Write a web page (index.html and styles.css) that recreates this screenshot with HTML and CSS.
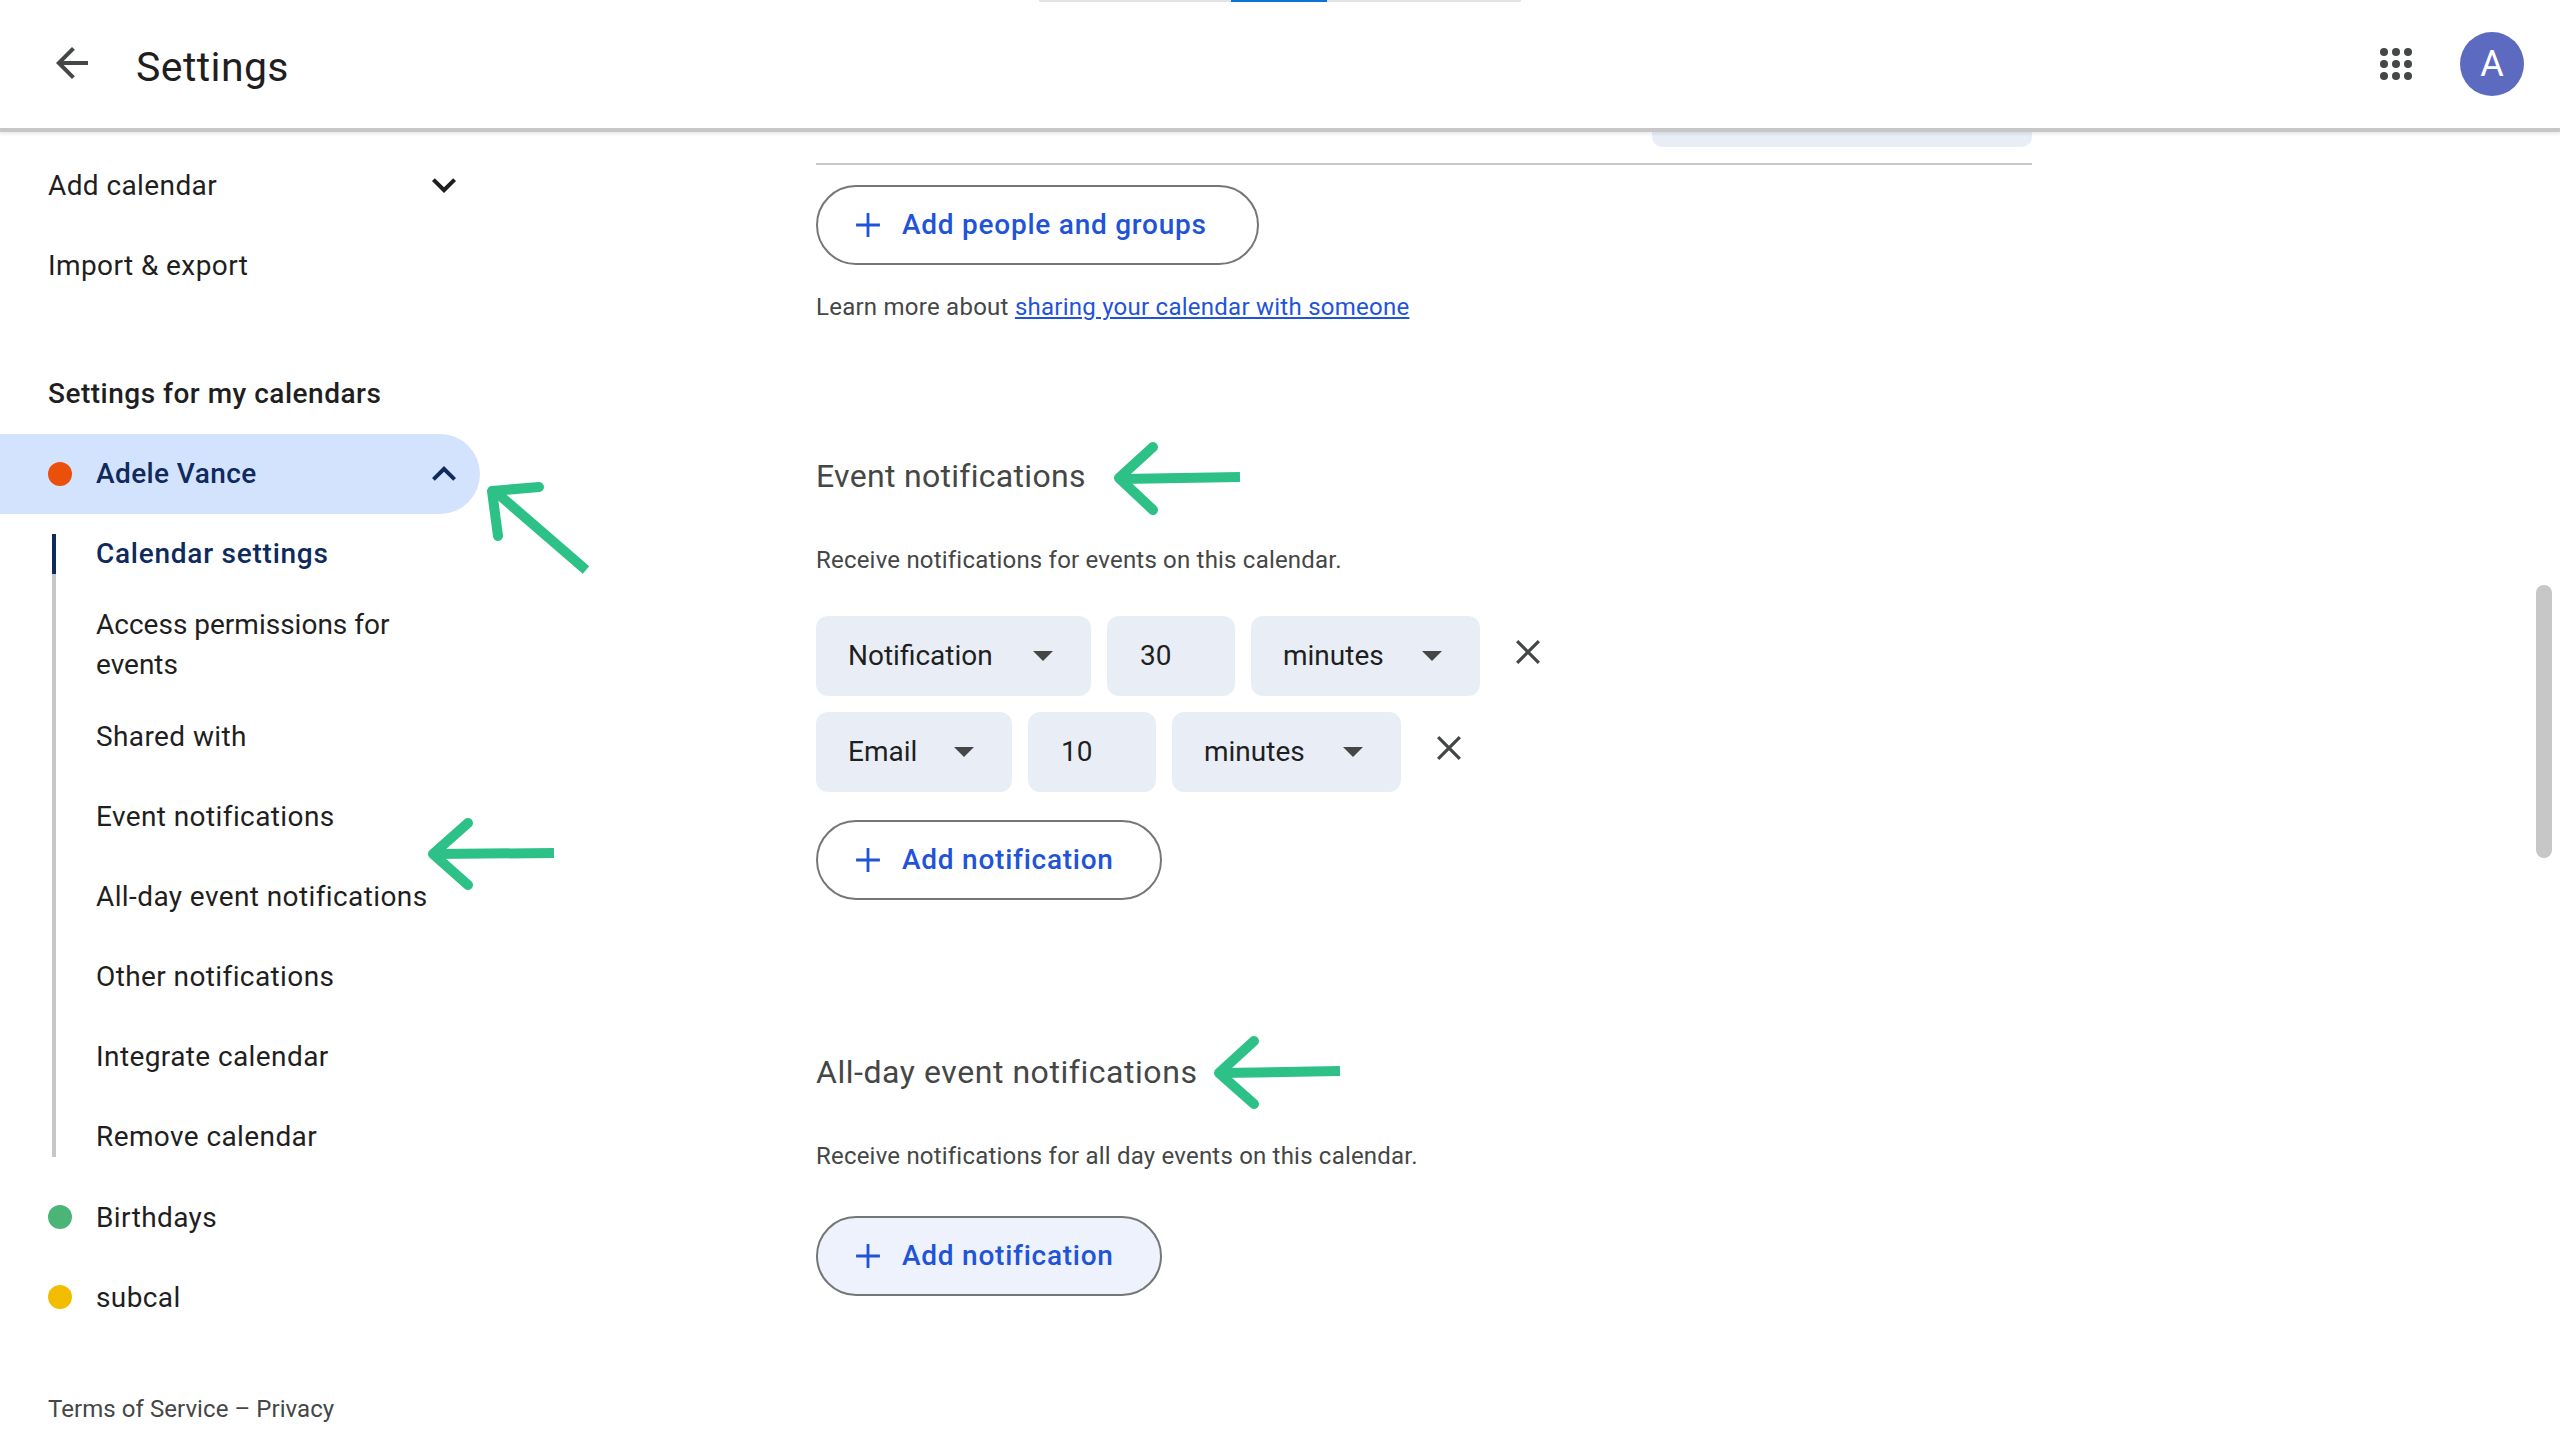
FILE: index.html
```html
<!DOCTYPE html>
<html lang="en">
<head>
<meta charset="utf-8">
<title>Settings</title>
<link rel="stylesheet" href="styles.css">
</head>
<body>
<div class="page">
  <div class="strip"><span class="strip-active"></span></div>
  <header class="topbar">
    <svg class="back" viewBox="0 0 24 24"><path d="M20 11H7.83l5.59-5.59L12 4l-8 8 8 8 1.41-1.41L7.83 13H20v-2z"/></svg>
    <h1 class="title">Settings</h1>
    <svg class="waffle" viewBox="0 0 32 32"><circle cx="4" cy="4" r="4"/><circle cx="16" cy="4" r="4"/><circle cx="28" cy="4" r="4"/><circle cx="4" cy="16" r="4"/><circle cx="16" cy="16" r="4"/><circle cx="28" cy="16" r="4"/><circle cx="4" cy="28" r="4"/><circle cx="16" cy="28" r="4"/><circle cx="28" cy="28" r="4"/></svg>
    <div class="avatar">A</div>
  </header>
  <div class="layout">
    <nav class="sidebar">
      <div class="row row-top"><span>Add calendar</span><svg class="chev" viewBox="0 0 24 24"><path d="M16.59 8.59L12 13.17 7.41 8.59 6 10l6 6 6-6z"/></svg></div>
      <div class="row"><span>Import &amp; export</span></div>
      <div class="row row-heading"><span>Settings for my calendars</span></div>
      <div class="row row-cal row-active"><i class="dot dot-orange"></i><span>Adele Vance</span><svg class="chev" viewBox="0 0 24 24"><path d="M12 8l-6 6 1.41 1.41L12 10.83l4.59 4.58L18 14z"/></svg></div>
      <div class="subnav">
        <a class="sub sub-active">Calendar settings</a>
        <a class="sub sub-tight">Access permissions for events</a>
        <a class="sub">Shared with</a>
        <a class="sub">Event notifications</a>
        <a class="sub">All-day event notifications</a>
        <a class="sub">Other notifications</a>
        <a class="sub">Integrate calendar</a>
        <a class="sub">Remove calendar</a>
      </div>
      <div class="row row-cal row-after"><i class="dot dot-green"></i><span>Birthdays</span></div>
      <div class="row row-cal"><i class="dot dot-yellow"></i><span>subcal</span></div>
      <div class="terms">Terms of Service – Privacy</div>
    </nav>
    <main class="main">
      <div class="chunk"></div>
      <div class="divider"></div>
      <button class="add add-people"><svg class="plus" viewBox="0 0 24 24"><path d="M1 12h22M12 1v22"/></svg><span>Add people and groups</span></button>
      <p class="help help-learn">Learn more about <a class="link">sharing your calendar with someone</a></p>

      <h2 class="section section-event">Event notifications</h2>
      <p class="help help-desc">Receive notifications for events on this calendar.</p>
      <div class="notif notif-first">
        <div class="sel w-notif"><span>Notification</span><i class="tri"></i></div>
        <div class="sel w-num"><span>30</span></div>
        <div class="sel w-unit"><span>minutes</span><i class="tri"></i></div>
        <svg class="close" viewBox="0 0 24 24"><path d="M2 2l20 20M22 2L2 22"/></svg>
      </div>
      <div class="notif notif-second">
        <div class="sel w-email"><span>Email</span><i class="tri"></i></div>
        <div class="sel w-num"><span>10</span></div>
        <div class="sel w-unit"><span>minutes</span><i class="tri"></i></div>
        <svg class="close" viewBox="0 0 24 24"><path d="M2 2l20 20M22 2L2 22"/></svg>
      </div>
      <button class="add add-notif add-a"><svg class="plus" viewBox="0 0 24 24"><path d="M1 12h22M12 1v22"/></svg><span>Add notification</span></button>

      <h2 class="section section-allday">All-day event notifications</h2>
      <p class="help help-desc">Receive notifications for all day events on this calendar.</p>
      <button class="add add-notif add-b add-hover"><svg class="plus" viewBox="0 0 24 24"><path d="M1 12h22M12 1v22"/></svg><span>Add notification</span></button>
    </main>
  </div>
  <div class="scrollbar"></div>
  <svg class="annot" viewBox="0 0 2560 1440">
    <path class="shaft" d="M586 570L497 493"/><path class="head" d="M498 536L492 491L539 487"/>
    <path class="shaft" d="M554 853L436 854"/><path class="head" d="M468 823L433 854L468 885"/>
    <path class="shaft" d="M1240 477L1122 479"/><path class="head" d="M1153 447L1119 478L1153 510"/>
    <path class="shaft" d="M1340 1071L1222 1073"/><path class="head" d="M1254 1041L1219 1073L1254 1104"/>
  </svg>
</div>
</body>
</html>
```
FILE: styles.css
```css
* { box-sizing: border-box; }
html, body { margin: 0; padding: 0; background: #fff; }
body { font-family: Roboto, "Noto Sans", "Liberation Sans", sans-serif; color: #1f1f1f; }
.page { position: relative; width: 2560px; height: 1440px; overflow: hidden; display: flex; flex-direction: column; }

.strip { position: absolute; top: 0; left: 1039px; width: 482px; height: 2px; background: #e3e3e3; z-index: 3; }
.strip-active { position: absolute; left: 192px; width: 96px; height: 2px; background: #0b74d5; }

.topbar { flex: none; height: 132px; border-bottom: 4px solid #c7c7c7; box-shadow: 0 2px 3px rgba(60,64,67,.12); display: flex; align-items: center; position: relative; z-index: 2; background: #fff; }
.back { width: 48px; height: 48px; margin-left: 48px; fill: #444746; flex: none; margin-top: -2px; }
.title { margin: 5px 0 0 40px; font-size: 41px; font-weight: 400; letter-spacing: .4px; color: #1f1f1f; line-height: 48px; flex: 1; }
.waffle { width: 32px; height: 32px; fill: #444746; flex: none; margin-right: 48px; }
.avatar { width: 64px; height: 64px; border-radius: 50%; background: #5c6bc0; color: #fff; font-size: 36px; line-height: 64px; text-align: center; margin-right: 36px; flex: none; }

.layout { flex: 1; display: flex; min-height: 0; }
.sidebar { width: 480px; flex: none; padding-top: 13px; font-size: 28px; letter-spacing: .4px; }
.row { height: 80px; padding-left: 48px; display: flex; align-items: center; color: #1f1f1f; }
.row > span { flex: 1; }
.row-heading { margin-top: 48px; font-weight: 500; height: 80px; letter-spacing: .5px; }
.row-cal .dot { width: 24px; height: 24px; border-radius: 50%; margin-right: 24px; flex: none; }
.row-active { height: 80px; margin-top: 1px; background: #d3e3fd; border-radius: 0 40px 40px 0; color: #0f2a5c; font-weight: 500; }
.row-active > span { margin-top: -1px; }
.row-after { margin-top: 20px; }
.chev { width: 48px; height: 48px; fill: #1f1f1f; margin-right: 12px; flex: none; }
.row-active .chev { fill: #0f2a5c; }
.dot-orange { background: #ea4f0c; }
.dot-green { background: #4bb477; }
.dot-yellow { background: #f2bd00; }

.subnav { margin: 20px 0 0 52px; border-left: 4px solid #c7c7c7; height: 623px; display: flex; flex-direction: column; gap: 40px; position: relative; }
.sub { display: block; padding-left: 40px; line-height: 40px; width: 420px; color: #1f1f1f; }
.sub-active { margin-left: -4px; padding-left: 40px; border-left: 4px solid #0f2a5c; color: #0f2a5c; font-weight: 500; letter-spacing: .75px; margin-bottom: -9px; }
.sub-tight { margin-bottom: -8px; width: 380px; letter-spacing: 0; }
.terms { margin: 52px 0 0 48px; font-size: 24px; line-height: 40px; color: #444746; letter-spacing: .06px; }

.main { width: 1216px; margin-left: 336px; flex: none; }
.chunk { width: 380px; height: 15px; margin-left: auto; background: #e9eef6; border-radius: 0 0 10px 10px; }
.divider { height: 2px; margin-top: 16px; background: #c7c7c7; }
.add { display: flex; align-items: center; height: 80px; border: 2px solid #747775; border-radius: 40px; background: #fff; padding: 0 0 1px 37px; font: 500 28px Roboto, "Noto Sans", sans-serif; letter-spacing: .75px; color: #1f54d8; }
.add-hover { background: #edf2fc; }
.add-people { width: 443px; margin-top: 20px; }
.add-notif { width: 346px; }
.add-a { margin-top: 28px; }
.add-b { margin-top: 40px; }
.plus { width: 26px; height: 26px; margin-right: 21px; fill: none; stroke: #1f54d8; stroke-width: 2.6; flex: none; }
.help { margin: 0; font-size: 24px; line-height: 40px; color: #444746; letter-spacing: .2px; }
.help-learn { margin-top: 22px; letter-spacing: .25px; }
.help-desc { margin-top: 40px; }
.link { color: #1f54d8; text-decoration: underline; }
.section { margin: 0; font-size: 32px; line-height: 48px; font-weight: 400; color: #444746; letter-spacing: .3px; }
.section-event { margin-top: 125px; }
.section-allday { margin-top: 148px; letter-spacing: .55px; }

.notif { display: flex; gap: 16px; height: 80px; }
.notif-first { margin-top: 36px; }
.notif-second { margin-top: 16px; }
.sel { height: 80px; background: #e9eef6; border-radius: 12px; padding: 0 38px 2px 32px; display: flex; align-items: center; justify-content: space-between; font-size: 28px; color: #1f1f1f; flex: none; }
.w-notif { width: 275px; }
.w-email { width: 196px; }
.w-num { width: 128px; padding-left: 33px; }
.w-unit { width: 229px; }
.tri { width: 0; height: 0; border-left: 10px solid transparent; border-right: 10px solid transparent; border-top: 10px solid #444746; flex: none; margin-top: 2px; }
.close { width: 26px; height: 26px; margin: 23px 0 0 19px; fill: none; stroke: #444746; stroke-width: 3; flex: none; }

.scrollbar { position: absolute; left: 2536px; top: 585px; width: 16px; height: 273px; border-radius: 8px; background: #c7c7c7; }
.annot { position: absolute; inset: 0; width: 2560px; height: 1440px; pointer-events: none; z-index: 4; }
.shaft, .head { fill: none; stroke: #2ec187; stroke-width: 10; }
.head { stroke-linecap: round; stroke-linejoin: round; }
```
